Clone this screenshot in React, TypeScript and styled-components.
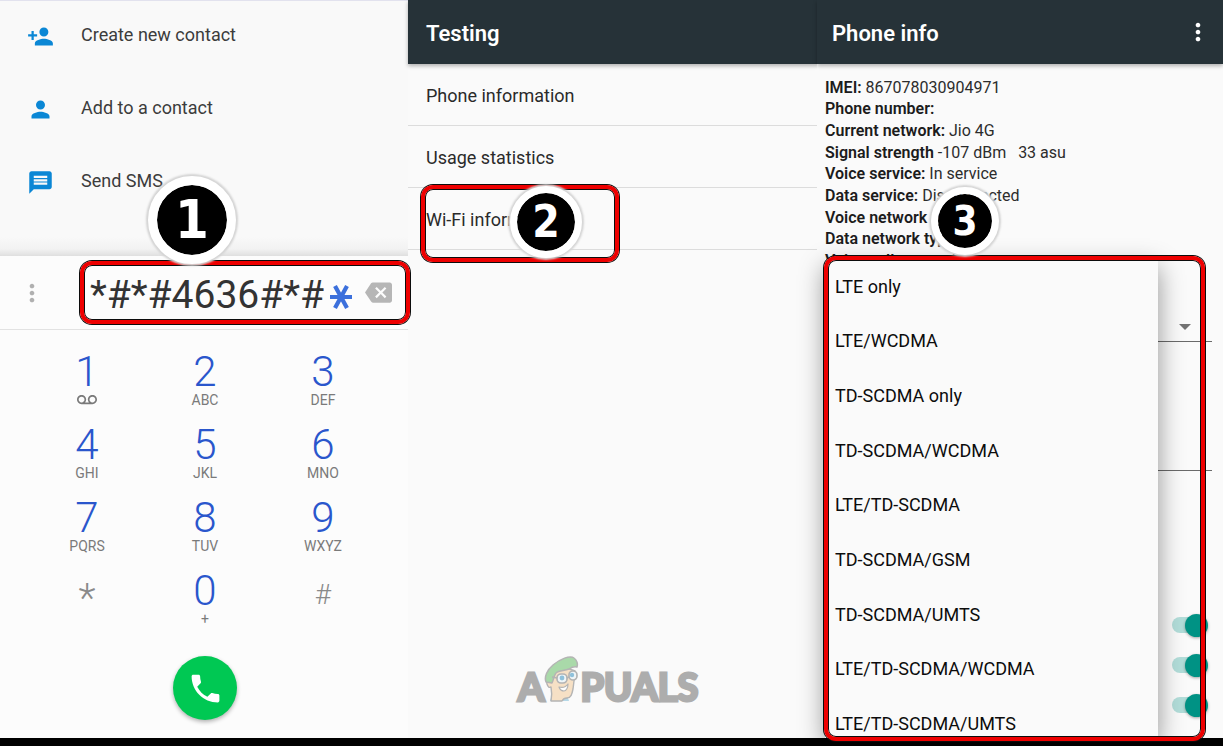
import React from "react";
import styled, { createGlobalStyle, css } from "styled-components";

const GlobalStyle = createGlobalStyle`
  *, *::before, *::after { box-sizing: border-box; }
  body { margin: 0; background: #000; font-family: Roboto, "Liberation Sans", sans-serif; }
  button, input, select { font: inherit; color: inherit; border: 0; margin: 0; padding: 0; background: none; border-radius: 0; }
  ul, h1, p { margin: 0; padding: 0; list-style: none; }
  svg { display: block; flex: none; }
`;

const Page = styled.div`
  min-height: 100vh;
  display: flex;
  flex-direction: column;
  overflow: hidden;
`;

const Screens = styled.main`
  flex: 1;
  display: grid;
  grid-template-columns: 408fr 409fr 406fr;
`;

const Screen = styled.section`
  position: relative;
  display: flex;
  flex-direction: column;
  min-width: 0;
  background: #fafafa;
`;

const BottomBar = styled.footer`
  height: 8px;
  background: #000;
`;

/* Annotations */

const Frame = styled.div`
  position: absolute;
  z-index: 3;
  border: 4px solid #ee0000;
  border-radius: 12px;
  box-shadow: 0 0 0 1px #0c0c0c, inset 0 0 0 1px #0c0c0c;
  pointer-events: none;
`;

const NumberFrame = styled(Frame)`
  inset: 5px -2px 5px 80px;
`;

const RowFrame = styled(Frame)`
  inset: -3px auto -13px 13px;
  width: 198px;
`;

const MenuFrame = styled(Frame)`
  inset: 256px 18px -3px 7px;
`;

const Badge = styled.span<{ $size: number; $ring: number; $font: number }>`
  position: absolute;
  z-index: 4;
  display: flex;
  align-items: center;
  justify-content: center;
  width: ${(p) => p.$size}px;
  height: ${(p) => p.$size}px;
  border: ${(p) => p.$ring}px solid #fff;
  border-radius: 50%;
  background: #000 content-box;
  box-shadow: 0 0 2px 2px #d4d4d4;
  color: #fff;
  font: 700 ${(p) => p.$font}px/1 "DejaVu Sans Condensed", "DejaVu Sans", sans-serif;
`;

const FirstBadge = styled(Badge)`
  top: -80px;
  left: 148px;
`;

const SecondBadge = styled(Badge)`
  top: -2px;
  left: 102px;
`;

const ThirdBadge = styled(Badge)`
  top: 187px;
  left: 114px;
`;

/* Dialer */

const ContactActions = styled.ul`
  height: 256px;
  border-top: 1px solid #e2e2ee;
  background: linear-gradient(#f9f9f9 0 236px, #f2f2f2 248px, #dfdfdf 255px);
`;

const ContactAction = styled.button`
  display: flex;
  align-items: center;
  gap: 27px;
  width: 100%;
  height: 73px;
  padding: 0 27px 2px;
  text-align: left;
  font-size: 18px;
  color: #3c3c3c;

  svg { fill: #0b87d5; }
  span { padding-bottom: 4px; }
`;

const NumberBar = styled.div`
  position: relative;
  display: flex;
  align-items: center;
  height: 74px;
  padding: 0 16px 0 18px;
  border-bottom: 1px solid #e2e2e2;
  background: #fcfcfc;
`;

const IconButton = styled.button`
  display: block;
  flex: none;
  cursor: pointer;
`;

const NumberInput = styled.input`
  flex: 1;
  min-width: 0;
  margin-left: 44px;
  padding-top: 5px;
  font-size: 39px;
  line-height: 48px;
  color: #333;
  outline: none;
`;

const StarMark = styled.svg`
  margin: 8px 12px 0 5px;
`;

const Keypad = styled.div`
  display: grid;
  grid-template-columns: repeat(3, 1fr);
  padding: 14px 26px 0 28px;
`;

const Key = styled.button`
  display: flex;
  flex-direction: column;
  align-items: center;
  height: 73px;
  padding-top: 8px;
`;

const KeyDigit = styled.span<{ $symbol?: "star" | "hash" }>`
  font-size: 42px;
  font-weight: 300;
  line-height: 40px;
  color: #2a56cc;
  ${(p) =>
    p.$symbol &&
    css`
      font-size: ${p.$symbol === "star" ? 40 : 28}px;
      line-height: ${p.$symbol === "star" ? 56 : 48}px;
      color: #8a8a8a;
    `}
`;

const KeyLetters = styled.span`
  display: flex;
  align-items: center;
  height: 16px;
  font-size: 14px;
  line-height: 16px;
  color: #7a7a7a;
`;

const CallButton = styled.button`
  align-self: center;
  display: flex;
  align-items: center;
  justify-content: center;
  width: 64px;
  height: 64px;
  margin: 20px 0 18px 2px;
  border-radius: 50%;
  background: #00c853;
  box-shadow: 0 2px 4px rgba(0, 0, 0, 0.3);
`;

const DialerScreen = styled(Screen)`
  background: #fcfcfc;
`;

/* Settings screens */

const AppBar = styled.header`
  display: flex;
  align-items: center;
  justify-content: space-between;
  height: 64px;
  padding: 0 11px 0 15px;
  background: #263238;
  box-shadow: 0 2px 4px rgba(0, 0, 0, 0.3);
  color: #fff;
`;

const TestingBar = styled(AppBar)`
  padding-left: 18px;
`;

const Title = styled.h1`
  padding-top: 4px;
  font-size: 22px;
  font-weight: 600;
  line-height: 32px;
`;

const TestRow = styled.li`
  position: relative;
  border-bottom: 1px solid #dcdcdc;
`;

const TestButton = styled.button`
  display: block;
  width: 100%;
  height: 61px;
  padding: 2px 18px 0;
  text-align: left;
  font-size: 18px;
  color: #2a2a2a;
`;

const Watermark = styled.div`
  position: absolute;
  top: 656px;
  left: 110px;
  display: flex;
  align-items: flex-end;
  color: #adadad;
  font: 700 38px/32px Lato, sans-serif;
  -webkit-text-stroke: 3px #adadad;
  stroke-linejoin: round;

  svg { opacity: 0.85; }
`;

const InfoList = styled.div`
  display: grid;
  grid-auto-rows: 1fr;
  align-items: center;
  height: 195px;
  margin: 13px 8px 0;
  font-size: 16px;
  line-height: 20px;
  color: #2c2c2c;
  white-space: pre;

  b { font-weight: 600; color: #1c1c1c; }
`;

const FieldBox = styled.div<{ $gap: number }>`
  position: relative;
  margin: ${(p) => p.$gap}px 11px 0 8px;
  border-bottom: 1px solid #6a6a6a;

  select, input {
    display: block;
    width: 100%;
    height: 28px;
    appearance: none;
    font-size: 16px;
  }
  svg { position: absolute; right: 21px; bottom: 11px; fill: #737373; }
`;

const Switches = styled.div`
  display: flex;
  flex-direction: column;
  align-items: flex-end;
  padding: 134px 15px 0 0;
`;

const Switch = styled.input`
  appearance: none;
  display: flex;
  align-items: center;
  width: 36px;
  height: 40px;

  &::before {
    content: "";
    width: 33px;
    height: 16px;
    border-radius: 8px;
    background: #b3deda;
  }
  &::after {
    content: "";
    flex: none;
    width: 23px;
    height: 23px;
    margin-left: -20px;
    border-radius: 50%;
    background: #009284;
    box-shadow: 0 1px 3px rgba(0, 0, 0, 0.35);
  }
`;

const Menu = styled.div`
  position: absolute;
  inset: 259px 65px 0 8px;
  z-index: 2;
  overflow: hidden;
  background: #fafafa;
  box-shadow: 0 8px 24px rgba(0, 0, 0, 0.42);
`;

const MenuList = styled.ul`
  display: grid;
  grid-auto-rows: 1fr;
  height: 492px;
`;

const MenuItem = styled.button`
  width: 100%;
  height: 100%;
  padding: 0 10px;
  text-align: left;
  font-size: 18px;
  color: #0c0c0c;
`;

const paths = {
  personAdd:
    "M15 12c2.21 0 4-1.79 4-4s-1.79-4-4-4-4 1.79-4 4 1.79 4 4 4zm-9-2V7H4v3H1v2h3v3h2v-3h3v-2H6zm9 4c-2.67 0-8 1.34-8 4v2h16v-2c0-2.66-5.33-4-8-4z",
  person:
    "M12 12c2.21 0 4-1.79 4-4s-1.79-4-4-4-4 1.79-4 4 1.79 4 4 4zm0 2c-2.67 0-8 1.34-8 4v2h16v-2c0-2.66-5.33-4-8-4z",
  chat: "M20 2H4c-1.1 0-1.99.9-1.99 2L2 22l4-4h14c1.1 0 2-.9 2-2V4c0-1.1-.9-2-2-2zm-2 12H6v-2h12v2zm0-3H6V9h12v2zm0-3H6V6h12v2z",
  more: "M12 8c1.1 0 2-.9 2-2s-.9-2-2-2-2 .9-2 2 .9 2 2 2zm0 2c-1.1 0-2 .9-2 2s.9 2 2 2 2-.9 2-2-.9-2-2-2zm0 6c-1.1 0-2 .9-2 2s.9 2 2 2 2-.9 2-2-.9-2-2-2z",
  backspace:
    "M22 3H7c-.69 0-1.23.35-1.59.88L0 12l5.41 8.11c.36.53.9.89 1.59.89h15c1.1 0 2-.9 2-2V5c0-1.1-.9-2-2-2zm-3 12.59L17.59 17 14 13.41 10.41 17 9 15.59 12.59 12 9 8.41 10.41 7 14 10.59 17.59 7 19 8.41 15.41 12 19 15.59z",
  voicemail:
    "M18.5 6C15.46 6 13 8.46 13 11.5c0 1.33.47 2.55 1.26 3.5H9.74c.79-.95 1.26-2.17 1.26-3.5C11 8.46 8.54 6 5.5 6S0 8.46 0 11.5 2.46 17 5.5 17h13c3.04 0 5.5-2.46 5.5-5.5S21.54 6 18.5 6zm-13 9C3.57 15 2 13.43 2 11.5S3.57 8 5.5 8 9 9.57 9 11.5 7.43 15 5.5 15zm13 0c-1.93 0-3.5-1.57-3.5-3.5S16.57 8 18.5 8 22 9.57 22 11.5 20.43 15 18.5 15z",
  call: "M6.62 10.79c1.44 2.83 3.76 5.14 6.59 6.59l2.2-2.2c.27-.27.67-.36 1.02-.24 1.12.37 2.33.57 3.57.57.55 0 1 .45 1 1V20c0 .55-.45 1-1 1-9.39 0-17-7.61-17-17 0-.55.45-1 1-1h3.5c.55 0 1 .45 1 1 0 1.25.2 2.45.57 3.57.11.35.03.74-.25 1.02l-2.2 2.2z",
};

function Icon({ name, size, color }: { name: keyof typeof paths; size: number; color?: string }) {
  return (
    <svg viewBox="0 0 24 24" width={size} height={size} fill={color} aria-hidden="true">
      <path d={paths[name]} />
    </svg>
  );
}

function Mascot() {
  return (
    <svg viewBox="0 0 36 46" width="36" height="46" aria-hidden="true">
      <path d="M6 45c1-5 4-6 7-4l11 1c0 1 1 2 1 3z" fill="#a9d3e6" />
      <path
        d="M5 25c-2-2-3 0-2 3s2 4 4 3c1 5 1 9 0 14h11c1-2 2-3 5-3 4 0 5-4 6-9l1-8 1-10-8-3-13 4z"
        fill="#f6dcbc" stroke="#a8a8a8" strokeWidth="1.4" strokeLinejoin="round"
      />
      <path
        d="M2 26C0 21 3 14 9 9 16 3 26-1 30 2c3 2 4 6 3 9-3-1-5 0-8 2-5 2-10 1-13 4-2 2-2 6-4 10z"
        fill="#9bd49b" stroke="#a8a8a8" strokeWidth="1.5" strokeLinejoin="round"
      />
      <rect x="13" y="18" width="10" height="9" rx="4" fill="#eef5f8" stroke="#a8a8a8" strokeWidth="1.7" />
      <rect x="25" y="15" width="8" height="9" rx="4" fill="#eef5f8" stroke="#a8a8a8" strokeWidth="1.7" />
      <circle cx="18" cy="22" r="2.4" fill="#7db8d6" />
      <circle cx="28" cy="19" r="2.2" fill="#7db8d6" />
      <path d="M23 22l2-1M13 22l-5-1" stroke="#a8a8a8" strokeWidth="1.4" />
      <path d="M15 31c4 1 7 0 9-3 0 4-2 7-4 7s-4-1-5-4z" fill="#fff" stroke="#a8a8a8" strokeWidth="1.2" />
    </svg>
  );
}

const contactActions: { icon: keyof typeof paths; label: string }[] = [
  { icon: "personAdd", label: "Create new contact" },
  { icon: "person", label: "Add to a contact" },
  { icon: "chat", label: "Send SMS" },
];

const keys: { digit: string; letters?: string; symbol?: "star" | "hash" }[] = [
  { digit: "1" },
  { digit: "2", letters: "ABC" },
  { digit: "3", letters: "DEF" },
  { digit: "4", letters: "GHI" },
  { digit: "5", letters: "JKL" },
  { digit: "6", letters: "MNO" },
  { digit: "7", letters: "PQRS" },
  { digit: "8", letters: "TUV" },
  { digit: "9", letters: "WXYZ" },
  { digit: "*", symbol: "star" },
  { digit: "0", letters: "+" },
  { digit: "#", symbol: "hash" },
];

const phoneInfo: [string, string][] = [
  ["IMEI:", "867078030904971"],
  ["Phone number:", ""],
  ["Current network:", "Jio 4G"],
  ["Signal strength", "-107 dBm   33 asu"],
  ["Voice service:", "In service"],
  ["Data service:", "Disconnected"],
  ["Voice network type:", ""],
  ["Data network type:", ""],
  ["Voice call status:", "Idle"],
];

const networkTypes = [
  "LTE only",
  "LTE/WCDMA",
  "TD-SCDMA only",
  "TD-SCDMA/WCDMA",
  "LTE/TD-SCDMA",
  "TD-SCDMA/GSM",
  "TD-SCDMA/UMTS",
  "LTE/TD-SCDMA/WCDMA",
  "LTE/TD-SCDMA/UMTS",
];

function Dialer() {
  return (
    <DialerScreen>
      <ContactActions>
        {contactActions.map((a) => (
          <li key={a.label}>
            <ContactAction>
              <Icon name={a.icon} size={27} />
              <span>{a.label}</span>
            </ContactAction>
          </li>
        ))}
      </ContactActions>
      <NumberBar>
        <IconButton aria-label="More options">
          <Icon name="more" size={28} color="#b0b0b0" />
        </IconButton>
        <NumberInput aria-label="Number" defaultValue="*#*#4636#*#" />
        <StarMark viewBox="0 0 24 24" width="24" height="24" aria-hidden="true">
          <path d="M1 12H23M6 1L18 23M18 1L6 23" stroke="#3c70dc" strokeWidth="4.2" />
        </StarMark>
        <IconButton aria-label="Delete digit">
          <Icon name="backspace" size={27} color="#b6b6b6" />
        </IconButton>
        <NumberFrame />
        <FirstBadge $size={88} $ring={9} $font={54}>1</FirstBadge>
      </NumberBar>
      <Keypad>
        {keys.map((k) => (
          <Key key={k.digit}>
            <KeyDigit $symbol={k.symbol}>{k.digit}</KeyDigit>
            {!k.symbol && (
              <KeyLetters>
                {k.letters ?? <Icon name="voicemail" size={20} color="#7a7a7a" />}
              </KeyLetters>
            )}
          </Key>
        ))}
      </Keypad>
      <CallButton aria-label="Call">
        <Icon name="call" size={37} color="#fff" />
      </CallButton>
    </DialerScreen>
  );
}

function Testing() {
  return (
    <Screen>
      <TestingBar>
        <Title>Testing</Title>
      </TestingBar>
      <ul>
        <TestRow><TestButton>Phone information</TestButton></TestRow>
        <TestRow><TestButton>Usage statistics</TestButton></TestRow>
        <TestRow>
          <TestButton>Wi-Fi information</TestButton>
          <RowFrame />
          <SecondBadge $size={72} $ring={7} $font={44}>2</SecondBadge>
        </TestRow>
      </ul>
      <Watermark>
        <span>A</span>
        <Mascot />
        <span>PUALS</span>
      </Watermark>
    </Screen>
  );
}

function PhoneInfo() {
  return (
    <Screen>
      <AppBar>
        <Title>Phone info</Title>
        <IconButton aria-label="More options">
          <Icon name="more" size={28} color="#fff" />
        </IconButton>
      </AppBar>
      <InfoList>
        {phoneInfo.map(([label, value]) => (
          <p key={label}><b>{label}</b> {value}</p>
        ))}
      </InfoList>
      <FieldBox $gap={41}>
        <select aria-label="Preferred network type"><option></option></select>
        <svg viewBox="0 0 12 6" width="12" height="6" aria-hidden="true"><path d="M0 0h12l-6 6z" /></svg>
      </FieldBox>
      <FieldBox $gap={100}>
        <input aria-label="SMSC" />
      </FieldBox>
      <Switches>
        <Switch type="checkbox" role="switch" defaultChecked aria-label="VoLTE provisioned" />
        <Switch type="checkbox" role="switch" defaultChecked aria-label="Video calling provisioned" />
        <Switch type="checkbox" role="switch" defaultChecked aria-label="Wi-Fi calling provisioned" />
      </Switches>
      <Menu>
        <MenuList>
          {networkTypes.map((t) => (
            <li key={t}><MenuItem>{t}</MenuItem></li>
          ))}
        </MenuList>
      </Menu>
      <MenuFrame />
      <ThirdBadge $size={68} $ring={7} $font={40}>3</ThirdBadge>
    </Screen>
  );
}

export default function App() {
  return (
    <Page>
      <GlobalStyle />
      <Screens>
        <Dialer />
        <Testing />
        <PhoneInfo />
      </Screens>
      <BottomBar />
    </Page>
  );
}
